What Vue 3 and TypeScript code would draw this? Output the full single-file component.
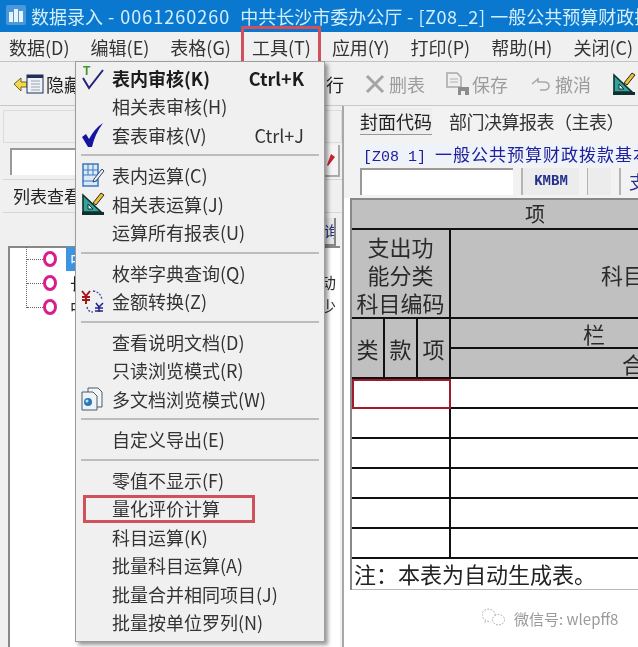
<script setup lang="ts">
type MenuRow = { label?: string; key?: string; bold?: boolean; icon?: string; mark?: boolean; sep?: boolean }

const menus = ['数据(D)', '编辑(E)', '表格(G)', '工具(T)', '应用(Y)', '打印(P)', '帮助(H)', '关闭(C)']

const rows: MenuRow[] = [
  { label: '表内审核(K)', key: 'Ctrl+K', bold: true, icon: 'tcheck' },
  { label: '相关表审核(H)' },
  { label: '套表审核(V)', key: 'Ctrl+J', icon: 'check' },
  { sep: true },
  { label: '表内运算(C)', icon: 'calc' },
  { label: '相关表运算(J)', icon: 'ruler' },
  { label: '运算所有报表(U)' },
  { sep: true },
  { label: '枚举字典查询(Q)' },
  { label: '金额转换(Z)', icon: 'yen' },
  { sep: true },
  { label: '查看说明文档(D)' },
  { label: '只读浏览模式(R)' },
  { label: '多文档浏览模式(W)', icon: 'docs' },
  { sep: true },
  { label: '自定义导出(E)' },
  { sep: true },
  { label: '零值不显示(F)' },
  { label: '量化评价计算', mark: true },
  { label: '科目运算(K)' },
  { label: '批量科目运算(A)' },
  { label: '批量合并相同项目(J)' },
  { label: '批量按单位罗列(N)' },
]

const blankRows = [0, 1, 2, 3, 4, 5]
const treeRows = ['中', '长', '中']
</script>

<template>
  <div class="window">
    <header class="title">
      <svg class="app-icon" width="20" height="20" viewBox="0 0 20 20">
        <rect width="20" height="20" rx="2" fill="#4a98dc" />
        <rect x="3" y="7" width="4" height="10" fill="#e8f3fb" />
        <rect x="8" y="4" width="4" height="13" fill="#e8f3fb" />
        <rect x="13" y="6" width="4" height="11" fill="#e8f3fb" />
      </svg>
      <span class="title-text">数据录入<span class="latin"> - 0061260260&nbsp; </span>中共长沙市委办公厅<span class="latin tight"> - [Z08_2] </span>一般公共预算财政拨款基本支出</span>
    </header>

    <nav class="menubar">
      <span v-for="m in menus" :key="m" class="menu-name" :class="{ hot: m === '工具(T)' }">{{ m }}</span>
    </nav>

    <div class="toolbar">
      <div class="tool hide-btn">
        <svg width="31" height="24" viewBox="0 0 31 24">
          <path d="M1 12 8 6v4h6v5H8v4z" fill="#f2d84a" stroke="#6b6420" />
          <rect x="14" y="3" width="16" height="18" fill="#eef2f6" stroke="#20305a" />
          <rect x="14" y="3" width="16" height="3" fill="#20305a" />
          <path d="M18 9h9M18 12h9M18 15h9M18 18h9" stroke="#9aa4b2" />
        </svg>
        <span>隐藏</span>
      </div>
      <span class="tool row-label">行</span>
      <div class="tool off del-btn">
        <svg width="22" height="22" viewBox="0 0 22 22"><path d="M3 3l16 16M19 3 3 19" stroke="#a4a4a4" stroke-width="3" /></svg>
        <span>删表</span>
      </div>
      <div class="tool off save-btn">
        <svg width="26" height="24" viewBox="0 0 26 24">
          <path d="M2 1h10l4 4v10H2z" fill="#efefef" stroke="#a8a8a8" stroke-width="1.5" />
          <path d="M5 7h8M5 10h8" stroke="#b0b0b0" />
          <rect x="13" y="15" width="11" height="8" fill="#8c8c8c" />
          <rect x="16" y="19" width="4" height="4" fill="#efefef" />
        </svg>
        <span>保存</span>
      </div>
      <div class="tool off undo-btn">
        <svg width="20" height="16" viewBox="0 0 20 16"><path d="M1 8l6-5v3h6q5 0 5 4t-5 4H9" fill="none" stroke="#a8a8a8" stroke-width="1.6" /></svg>
        <span>撤消</span>
      </div>
      <svg class="tool-end" width="24" height="24" viewBox="0 0 24 24">
        <path d="M2 3 20 20H2z" fill="#34a39a" stroke="#10302e" stroke-width="1.6" />
        <path d="M7 12l5 5H7z" fill="#e6f2f0" stroke="#10302e" />
        <path d="M12 11 20 1l3 2-8 10z" fill="#e8c23c" stroke="#2c2a10" />
        <rect x="1" y="20" width="22" height="3" fill="#10302e" />
      </svg>
    </div>

    <main class="body">
      <section class="left">
        <div class="left-tabs"></div>
        <div class="search">
          <div class="search-input"></div>
          <div class="flag-btn">
            <svg width="12" height="14" viewBox="0 0 12 14"><path d="M7 1l4 3-7 9-1-1z" fill="#c8222c" /></svg>
          </div>
        </div>
        <div class="list-tab">列表查看</div>
        <div class="query-row"><span class="query-btn">询</span></div>
        <div class="tree-wrap">
          <ul class="tree">
            <li v-for="(t, i) in treeRows" :key="i" class="tree-row">
              <i class="dots"></i>
              <i class="ring"></i>
              <span class="tree-label" :class="{ sel: i === 0 }">{{ t }}</span>
            </li>
          </ul>
          <div class="tree-side"><span>动</span><span>少</span></div>
        </div>
      </section>

      <section class="right">
        <div class="right-top">
          <div class="tabs">
            <span class="tab-btn">封面代码</span>
            <span class="tab-title">部门决算报表（主表）</span>
          </div>
          <div class="sheet-name"><span class="mono">[Z08 1] </span>一般公共预算财政拨款基本支出决算表</div>
          <div class="fields">
            <div class="field-input"></div>
            <div class="field-code">KMBM</div>
            <div class="field-blank"></div>
            <div class="field-zhi">支出</div>
          </div>
        </div>

        <div class="sheet">
          <div class="cell head span-all big-item">项</div>
          <div class="cell head code-head">
            <span>支出功</span><span>能分类</span><span>科目编码</span>
          </div>
          <div class="cell head name-head">科目名称</div>
          <div class="cell head sub">类</div>
          <div class="cell head sub">款</div>
          <div class="cell head sub">项</div>
          <div class="lan">
            <div class="cell head lan-top">栏</div>
            <div class="cell head lan-bottom">合计</div>
          </div>
          <template v-for="i in blankRows" :key="i">
            <div class="cell blank code-cell" :class="{ active: i === 0 }"></div>
            <div class="cell blank wide"></div>
          </template>
          <div class="note span-all">注：本表为自动生成表。</div>
        </div>

        <div class="watermark">
          <svg width="26" height="22" viewBox="0 0 30 24" fill="none" stroke="#9a9a9a" stroke-dasharray="2 1.6">
            <path d="M15 9A7.500 6.500 0 1 0 4 14l-1 3 3-1.500q2 1 4 1" />
            <ellipse cx="19" cy="14" rx="7" ry="6" />
          </svg>
          <span>微信号: wlepff8</span>
        </div>
      </section>

      <div class="dropdown">
        <template v-for="(r, i) in rows" :key="i">
          <div v-if="r.sep" class="sep"></div>
          <div v-else class="item" :class="{ bold: r.bold, marked: r.mark }">
            <span class="item-icon">
              <svg v-if="r.icon === 'tcheck'" width="24" height="26" viewBox="0 0 24 26">
                <text x="2" y="10" font-size="12" font-weight="700" fill="#3c9a2c" font-family="Liberation Sans">T</text>
                <path d="M2 13l6 10L22 5" fill="none" stroke="#23237a" stroke-width="2" />
              </svg>
              <svg v-else-if="r.icon === 'check'" width="24" height="26" viewBox="0 0 24 26">
                <path d="M1 15l4-3 3 5Q14 6 22 1q-8 11-11 24H7z" fill="#1414a0" />
              </svg>
              <svg v-else-if="r.icon === 'calc'" width="24" height="24" viewBox="0 0 24 24">
                <rect x="2" y="1" width="15" height="22" fill="#dbe9f6" stroke="#3a78c0" stroke-width="1.5" />
                <path d="M2 7h15M2 12h15M7 1v11M12 1v11" stroke="#3a78c0" />
                <path d="M2 18h15" stroke="#3a78c0" />
                <path d="M13 16 21 6l2 2-8 10-3 1z" fill="#eef3f8" stroke="#30406a" />
              </svg>
              <svg v-else-if="r.icon === 'ruler'" width="24" height="24" viewBox="0 0 24 24">
                <path d="M2 3 20 20H2z" fill="#34a39a" stroke="#10302e" stroke-width="1.6" />
                <path d="M7 12l5 5H7z" fill="#e6f2f0" stroke="#10302e" />
                <path d="M12 11 20 1l3 2-8 10z" fill="#e8c23c" stroke="#2c2a10" />
                <rect x="1" y="20" width="22" height="3" fill="#10302e" />
              </svg>
              <svg v-else-if="r.icon === 'yen'" width="24" height="24" viewBox="0 0 24 24">
                <path d="M1 2l4 5 4-5M5 7v8M1 8h8M1 11h8" fill="none" stroke="#a01818" stroke-width="2" />
                <path d="M15 14l3 4 4-4M18 18v5M14 19h8M14 22h8" fill="none" stroke="#24248a" stroke-width="1.500" />
                <path d="M12 2q8 1 9 9M6 18q1 5 6 5" fill="none" stroke="#3a48b0" stroke-width="1.300" stroke-dasharray="2 1.500" />
              </svg>
              <svg v-else-if="r.icon === 'docs'" width="22" height="24" viewBox="0 0 22 24">
                <path d="M7 1h10l4 4v15H7z" fill="#f3f6f8" stroke="#4a5a6a" />
                <path d="M1 5h11l4 4v14H1z" fill="#eef3f7" stroke="#4a5a6a" />
                <circle cx="7" cy="15" r="4" fill="#2a78b8" />
                <circle cx="6" cy="14" r="1.500" fill="#bfe0f5" />
              </svg>
            </span>
            <span class="item-label">{{ r.label }}</span>
            <span v-if="r.key" class="item-key">{{ r.key }}</span>
          </div>
        </template>
      </div>
    </main>
  </div>
</template>

<style>
html, body { margin: 0; background: #fff; }
</style>

<style scoped>
.window {
  position: relative;
  width: 638px;
  height: 647px;
  overflow: hidden;
  display: flex;
  flex-direction: column;
  background: #f0f0f0;
  color: #222;
  font-family: "Noto Sans CJK SC", "Noto Sans", sans-serif;
  filter: blur(0.4px);
}

.title {
  flex: none;
  height: 32px;
  box-sizing: border-box;
  display: flex;
  align-items: center;
  gap: 5px;
  padding-left: 6px;
  background: #0a78cf;
  color: #d3effc;
  font-size: 18px;
  white-space: nowrap;
  overflow: hidden;
}

.app-icon { flex: none; margin-top: -3px; }
.latin { letter-spacing: 1px; white-space: pre; }
.latin.tight { letter-spacing: 0.6px; }

.menubar {
  flex: none;
  height: 30px;
  box-sizing: border-box;
  display: flex;
  align-items: center;
  gap: 21px;
  padding-left: 9px;
  font-size: 18px;
  color: #333;
  border-bottom: 1px solid #c4c4c4;
  white-space: nowrap;
}

.menu-name { position: relative; line-height: 24px; }

.menu-name.hot::after {
  content: "";
  position: absolute;
  left: -11px;
  right: -10px;
  top: -9px;
  bottom: -6px;
  border: 3px solid #d0505c;
}

.toolbar {
  flex: none;
  height: 44px;
  box-sizing: border-box;
  display: flex;
  align-items: center;
  padding-left: 13px;
  font-size: 18px;
  border-bottom: 1px solid #c8c8c8;
  white-space: nowrap;
}

.tool { display: flex; align-items: center; gap: 2px; }
.tool.off { color: #9c9c9c; }
.hide-btn { width: 313px; }
.row-label { width: 38px; }
.del-btn { width: 81px; gap: 3px; }
.save-btn { width: 86px; gap: 1px; }
.undo-btn { width: 81px; gap: 4px; }
.tool-end { flex: none; }

.body {
  position: relative;
  flex: 1;
  min-height: 0;
  display: flex;
}

.left {
  flex: none;
  width: 344px;
  box-sizing: border-box;
  padding: 4px 0 0 3px;
  display: flex;
  flex-direction: column;
  border-right: 2px solid #a8a8a8;
}

.left-tabs {
  height: 33px;
  border: 1px solid #dcdcdc;
  box-sizing: border-box;
}

.search {
  height: 36px;
  display: flex;
  align-items: center;
  justify-content: space-between;
  padding: 0 2px 0 7px;
  border-bottom: 1px solid #d6d6d6;
}

.search-input {
  width: 200px;
  height: 27px;
  background: #fff;
  border-left: 2px solid #999;
  border-top: 2px solid #999;
  box-sizing: border-box;
}

.flag-btn {
  width: 18px;
  height: 32px;
  display: flex;
  align-items: center;
  justify-content: center;
  background: #f4f4f4;
  border-right: 2px solid #aaa;
  border-bottom: 2px solid #aaa;
  box-sizing: border-box;
}

.list-tab {
  height: 33px;
  line-height: 32px;
  padding-left: 10px;
  font-size: 17px;
  border-bottom: 1px solid #d6d6d6;
  box-sizing: border-box;
}

.query-row {
  height: 33px;
  display: flex;
  justify-content: flex-end;
  align-items: flex-end;
  padding-right: 6px;
}

.query-btn {
  width: 10px;
  height: 26px;
  overflow: hidden;
  font-size: 15px;
  line-height: 26px;
  color: #20307a;
  background: #e6e6e6;
  border-right: 2px solid #888;
  border-bottom: 2px solid #888;
}

.tree-wrap {
  flex: 1;
  margin: 0 2px 0 5px;
  position: relative;
  background: #fff;
  border-left: 2px solid #888;
  border-top: 2px solid #888;
}

.tree {
  list-style: none;
  margin: -1px 0 0 16px;
  padding: 0;
  border-left: 1px dotted #666;
  height: 61px;
}

.tree-row {
  height: 24px;
  display: flex;
  align-items: center;
  font-size: 16px;
}

.dots {
  flex: none;
  width: 16px;
  border-top: 1px dotted #666;
}

.ring {
  flex: none;
  box-sizing: border-box;
  width: 14px;
  height: 16px;
  border: 3px solid #d81e8c;
  border-radius: 50%;
  margin-right: 9px;
}

.tree-label { padding: 0 4px; height: 24px; line-height: 24px; }
.tree-label.sel { background: #3d94e0; color: #fff; }

.tree-side {
  position: absolute;
  top: 22px;
  right: 4px;
  display: flex;
  flex-direction: column;
  font-size: 16px;
  line-height: 24px;
  color: #333;
}

.right {
  flex: 1;
  min-width: 0;
  position: relative;
  background: #fff;
  overflow: hidden;
}

.right-top {
  padding: 2px 0 3px 16px;
  background: #f2f2f2;
}

.tabs {
  height: 31px;
  display: flex;
  align-items: flex-start;
  gap: 17px;
  white-space: nowrap;
  font-size: 18px;
}

.tab-btn {
  line-height: 26px;
  background: #ededed;
  border-bottom: 1px solid #999;
}

.tab-title { line-height: 26px; letter-spacing: -0.5px; color: #333; }

.sheet-name {
  margin-top: 4px;
  height: 22px;
  line-height: 22px;
  padding-left: 3px;
  font-size: 17px;
  letter-spacing: 1px;
  color: #20209a;
  white-space: nowrap;
  background: #eef3fa;
}

.mono {
  font-family: "Liberation Mono", monospace;
  font-size: 15px;
  letter-spacing: 0;
}

.fields {
  margin-top: 3px;
  height: 27px;
  display: flex;
  gap: 8px;
}

.field-input {
  flex: none;
  width: 153px;
  background: #fff;
  border-left: 2px solid #999;
  border-top: 2px solid #999;
  box-sizing: border-box;
}

.field-code {
  flex: none;
  width: 58px;
  text-align: center;
  line-height: 27px;
  font-size: 14px;
  font-weight: 700;
  font-family: "Liberation Mono", monospace;
  color: #24308c;
  background: #ececec;
  border-left: 2px solid #b4b4b4;
  box-sizing: border-box;
}

.field-blank {
  flex: none;
  width: 23px;
  background: #ececec;
  border-left: 1px solid #b4b4b4;
}

.field-zhi {
  flex: none;
  width: 60px;
  padding-left: 8px;
  font-size: 18px;
  line-height: 27px;
  color: #24308c;
  border-left: 2px solid #b4b4b4;
}

.sheet {
  width: 366px;
  margin: 0 0 0 6px;
  display: grid;
  grid-template-columns: 33px 33px 33px 1fr;
  grid-template-rows: 30px 89px 60px repeat(6, 30px) 31px;
  background: #fff;
  border-top: 2px solid #888;
  border-left: 2px solid #888;
}

.cell {
  box-sizing: border-box;
  display: flex;
  align-items: center;
  justify-content: center;
  min-height: 0;
  line-height: 1;
  border-right: 2px solid #111;
  border-bottom: 2px solid #111;
  color: #2a2a2a;
  font-size: 22px;
}

.head { background: #c0c0c0; }
.span-all { grid-column: 1 / -1; }
.big-item { font-size: 20px; border-right: 0; }

.code-head {
  grid-column: 1 / 4;
  flex-direction: column;
  gap: 6px;
  white-space: nowrap;
}

.name-head {
  justify-content: flex-start;
  padding-left: 150px;
  white-space: nowrap;
  border-right: 0;
}

.lan {
  display: grid;
  grid-template-rows: 30px 30px;
  min-width: 0;
  min-height: 0;
}

.lan-top {
  justify-content: flex-start;
  padding-left: 132px;
  border-right: 0;
}

.lan-bottom {
  justify-content: flex-start;
  padding-left: 171px;
  border-right: 0;
  white-space: nowrap;
}

.code-cell { grid-column: 1 / 4; }
.wide { border-right: 0; }

.code-cell.active {
  border: 2px solid #a01c2c;
}

.note {
  padding-left: 2px;
  font-size: 22px;
  line-height: 29px;
  color: #222;
  white-space: nowrap;
  border-top: 2px solid #111;
  border-bottom: 1px solid #b8b8b8;
  margin-top: -2px;
  box-sizing: border-box;
}

.watermark {
  position: absolute;
  left: 138px;
  top: 501px;
  display: flex;
  align-items: center;
  gap: 6px;
  font-size: 15px;
  color: #9a9a9a;
  white-space: nowrap;
}

.dropdown {
  position: absolute;
  left: 75px;
  top: -45px;
  width: 250px;
  box-sizing: border-box;
  padding: 1.5px 5px 4px 5px;
  background: #f0f0f0;
  border: 1px solid #9c9c9c;
  box-shadow: 3px 3px 4px rgba(0, 0, 0, 0.4);
}

.item {
  position: relative;
  height: 28.500px;
  display: flex;
  align-items: center;
  font-size: 18px;
  color: #333;
  white-space: nowrap;
}

.item.bold { font-weight: 700; color: #1c1c1c; }
.item-icon {
  flex: none;
  width: 31px;
  display: flex;
  justify-content: flex-start;
}

.item-key {
  position: absolute;
  right: 15px;
}

.item.marked::after {
  content: "";
  position: absolute;
  left: 2px;
  top: 1px;
  width: 166px;
  height: 22px;
  border: 3px solid #d0505c;
}

.sep {
  height: 2px;
  margin: 5px 0;
  background: #bdbdbd;
}
</style>
